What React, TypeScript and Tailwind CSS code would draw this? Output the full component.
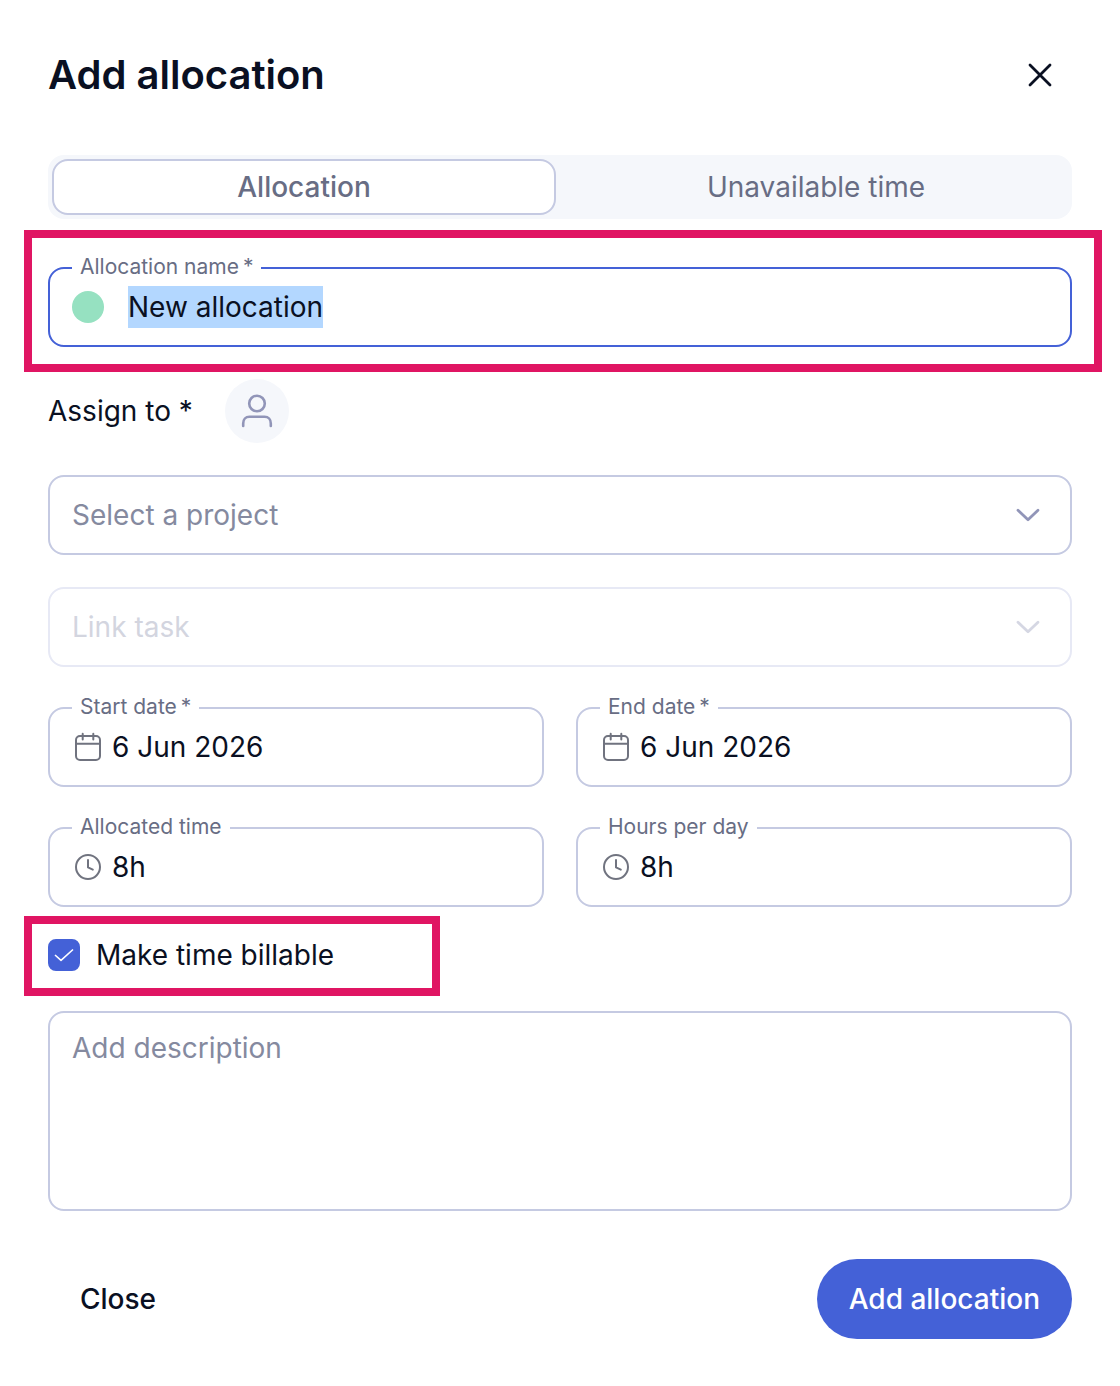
import { useEffect, useRef, useState } from 'react';
import type { ReactNode } from 'react';

type FieldProps = {
  id: string;
  label: string;
  required?: boolean;
  defaultValue: string;
  icon: ReactNode;
};

function FloatingLabel({ htmlFor, label, required }: { htmlFor: string; label: string; required?: boolean }) {
  return (
    <label
      htmlFor={htmlFor}
      className="absolute -top-4 left-[22px] flex gap-1 bg-white px-2 text-[21px] leading-7 whitespace-nowrap text-[#686d84]"
    >
      <span>{label}</span>
      {required && <span>*</span>}
    </label>
  );
}

function Field({ id, label, required, defaultValue, icon }: FieldProps) {
  return (
    <div className="relative flex h-20 min-w-0 flex-1 items-center gap-2 rounded-2xl border-2 border-[#c5cae2] px-[22px]">
      <FloatingLabel htmlFor={id} label={label} required={required} />
      {icon}
      <input
        id={id}
        type="text"
        required={required}
        defaultValue={defaultValue}
        className="h-[42px] min-w-0 flex-1 bg-transparent outline-none"
      />
    </div>
  );
}

function SelectField({ id, label, disabled }: { id: string; label: string; disabled?: boolean }) {
  return (
    <div className="relative flex items-center">
      <select
        id={id}
        aria-label={label}
        disabled={disabled}
        defaultValue=""
        className="h-20 w-full appearance-none rounded-2xl border-2 border-[#c5cae2] bg-white px-[22px] text-[#858a9f] outline-none disabled:border-[#e7e9f5] disabled:text-[#d3d5df] disabled:opacity-100"
      >
        <option value="">{label}</option>
      </select>
      <svg
        viewBox="0 0 32 32"
        fill="none"
        stroke="currentColor"
        strokeWidth="2.8"
        strokeLinecap="round"
        strokeLinejoin="round"
        className={
          disabled
            ? 'pointer-events-none absolute right-7 size-8 text-[#d5d7e3]'
            : 'pointer-events-none absolute right-7 size-8 text-[#9195b8]'
        }
        aria-hidden="true"
      >
        <path d="M6 11.2 16 20.800 26 11.200" />
      </svg>
    </div>
  );
}

function CalendarIcon() {
  return (
    <svg viewBox="0 0 32 32" fill="none" stroke="#70737f" strokeWidth="2" strokeLinecap="round" className="size-8 shrink-0" aria-hidden="true">
      <rect x="4" y="5" width="24" height="24" rx="4" />
      <path d="M4 12.800h24M10.700 2.800v5.600M21.300 2.800v5.600" />
    </svg>
  );
}

function ClockIcon() {
  return (
    <svg viewBox="0 0 32 32" fill="none" stroke="#70737f" strokeWidth="2" strokeLinecap="round" strokeLinejoin="round" className="size-8 shrink-0" aria-hidden="true">
      <circle cx="16" cy="16" r="12" />
      <path d="M16 9v7.400l4.800 2.200" />
    </svg>
  );
}

export default function App() {
  const nameRef = useRef<HTMLInputElement>(null);
  const [tab, setTab] = useState('allocation');

  useEffect(() => {
    nameRef.current?.focus();
    nameRef.current?.select();
  }, []);

  const tabs = [
    { id: 'allocation', label: 'Allocation' },
    { id: 'unavailable', label: 'Unavailable time' },
  ];

  return (
    <main className="bg-white px-12 pt-[47px] pb-12 font-['Inter',sans-serif] text-[28px] leading-[42px] text-[#0a1022]">
      <form onSubmit={(e) => e.preventDefault()}>
        <header className="flex h-14 items-center justify-between pr-4">
          <h1 className="text-[40px] leading-[56px] font-semibold">Add allocation</h1>
          <button type="button" aria-label="Close dialog" className="flex size-8 items-center justify-center">
            <svg viewBox="0 0 32 32" fill="none" stroke="currentColor" strokeWidth="2.800" strokeLinecap="round" className="size-8" aria-hidden="true">
              <path d="M6 6l20 20M26 6L6 26" />
            </svg>
          </button>
        </header>

        <div role="tablist" className="mt-13 flex h-16 gap-2 rounded-2xl bg-[#f5f7fb] p-1 text-[#686d84]">
          {tabs.map((t) => (
            <button
              key={t.id}
              type="button"
              role="tab"
              aria-selected={tab === t.id}
              onClick={() => setTab(t.id)}
              className={
                tab === t.id
                  ? 'flex-1 rounded-2xl border-2 border-[#c5cae2] bg-white font-medium leading-10'
                  : 'flex-1 rounded-2xl border-2 border-transparent leading-10'
              }
            >
              {t.label}
            </button>
          ))}
        </div>

        <div className="relative mt-12 flex h-20 items-center gap-6 rounded-2xl border-2 border-[#4461d7] px-[22px]">
          <FloatingLabel htmlFor="allocation-name" label="Allocation name" required />
          <button type="button" aria-label="Allocation colour" className="size-8 shrink-0 rounded-full bg-[#96e1c1]" />
          <input
            ref={nameRef}
            id="allocation-name"
            type="text"
            required
            defaultValue="New allocation"
            className="h-[42px] min-w-0 flex-1 bg-transparent outline-none selection:bg-[#b3d7ff] selection:text-[#0a1022]"
          />
          <div className="pointer-events-none absolute -top-[39px] -right-8 -bottom-[27px] -left-[26px] border-8 border-[#e01563]" />
        </div>

        <div className="mt-8 flex h-16 items-center gap-8">
          <span>Assign to *</span>
          <button type="button" aria-label="Assign to" className="flex size-16 items-center justify-center rounded-full bg-[#f5f7fb]">
            <svg viewBox="0 0 40 40" fill="none" stroke="#9195b8" strokeWidth="2.600" strokeLinecap="round" strokeLinejoin="round" className="size-10" aria-hidden="true">
              <circle cx="20" cy="12.500" r="7.800" />
              <path d="M6.200 35v-2.600c0-3.900 2.400-6.600 6.300-6.600h15c3.900 0 6.300 2.700 6.300 6.600v2.600" />
            </svg>
          </button>
        </div>

        <div className="mt-8 flex flex-col gap-8">
          <SelectField id="project" label="Select a project" />
          <SelectField id="task" label="Link task" disabled />
        </div>

        <div className="mt-10 flex gap-8">
          <Field id="start-date" label="Start date" required defaultValue="6 Jun 2026" icon={<CalendarIcon />} />
          <Field id="end-date" label="End date" required defaultValue="6 Jun 2026" icon={<CalendarIcon />} />
        </div>
        <div className="mt-10 flex gap-8">
          <Field id="allocated-time" label="Allocated time" defaultValue="8h" icon={<ClockIcon />} />
          <Field id="hours-per-day" label="Hours per day" defaultValue="8h" icon={<ClockIcon />} />
        </div>

        <div className="relative mt-8 flex h-8 w-96 items-center gap-4">
          <span className="grid size-8 shrink-0">
            <input
              id="billable"
              type="checkbox"
              defaultChecked
              className="peer col-start-1 row-start-1 size-8 appearance-none rounded-lg border-2 border-[#c5cae2] checked:border-[#4461d7] checked:bg-[#4461d7]"
            />
            <svg viewBox="0 0 32 32" fill="none" stroke="white" strokeWidth="1.600" strokeLinejoin="round" className="pointer-events-none invisible col-start-1 row-start-1 size-8 peer-checked:visible" aria-hidden="true">
              <path d="M7 16 13 21.300 25 10.500" />
            </svg>
          </span>
          <label htmlFor="billable">Make time billable</label>
          <div className="pointer-events-none absolute -top-[23px] -right-2 -bottom-[25px] -left-6 border-8 border-[#e01563]" />
        </div>

        <textarea
          aria-label="Description"
          placeholder="Add description"
          className="mt-10 block h-[200px] w-full resize-none rounded-2xl border-2 border-[#c5cae2] px-[22px] py-3.5 outline-none placeholder:text-[#858a9f]"
        />

        <footer className="mt-12 flex items-center justify-between font-medium">
          <button type="button" className="h-20 rounded-full px-8">
            Close
          </button>
          <button type="submit" className="h-20 rounded-full bg-[#4461d7] px-8 text-white">
            Add allocation
          </button>
        </footer>
      </form>
    </main>
  );
}
